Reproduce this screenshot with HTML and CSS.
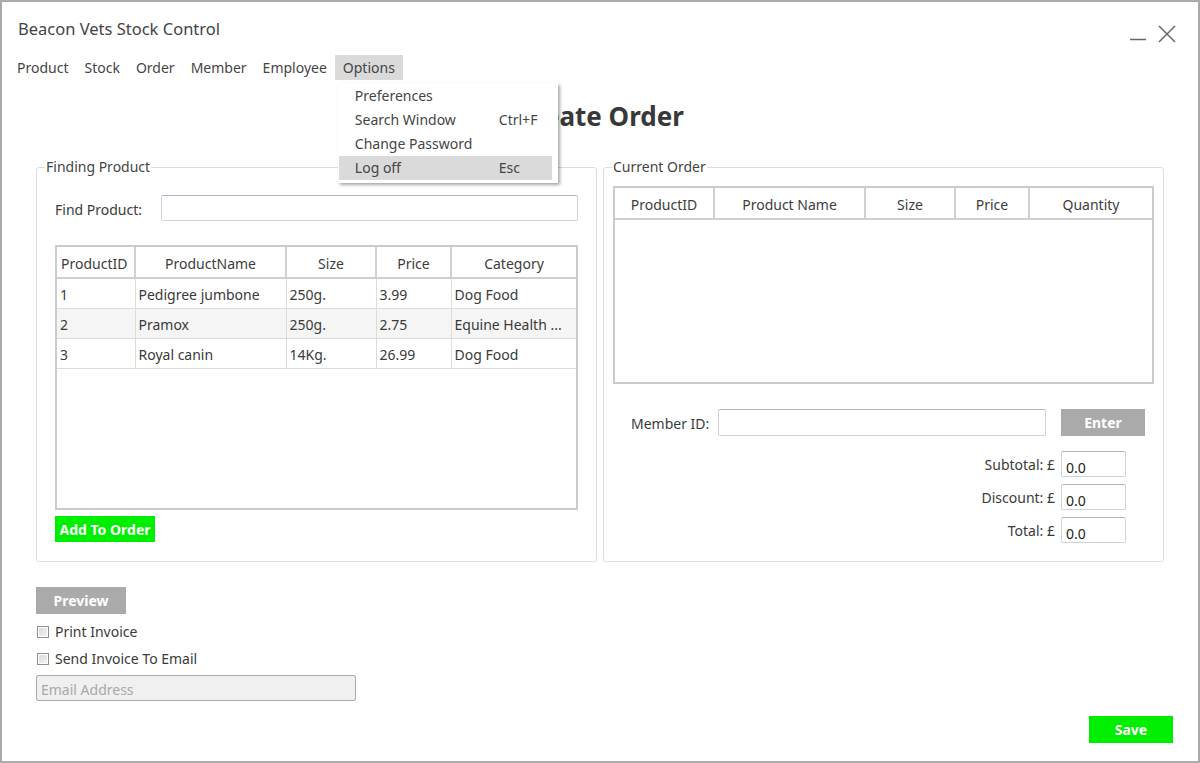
FILE: index.html
```html
<!DOCTYPE html>
<html>
<head>
<meta charset="utf-8">
<title>Beacon Vets Stock Control</title>
<link rel="stylesheet" href="styles.css">
</head>
<body>
<div class="window">
  <div class="titlebar">
    <div class="title">Beacon Vets Stock Control</div>
    <div class="controls">
      <svg class="min-icon" width="18" height="18" viewBox="0 0 18 18"><line x1="1" y1="14.5" x2="17" y2="14.5" stroke="#666" stroke-width="1.5"/></svg>
      <svg class="close-icon" width="18" height="18" viewBox="0 0 18 18"><path d="M1 1 L17 17 M17 1 L1 17" stroke="#666" stroke-width="1.5" fill="none"/></svg>
    </div>
  </div>
  <nav class="menubar">
    <div class="menu-item">Product</div>
    <div class="menu-item">Stock</div>
    <div class="menu-item">Order</div>
    <div class="menu-item">Member</div>
    <div class="menu-item">Employee</div>
    <div class="menu-item open">Options
      <div class="dropdown">
        <div class="dd-item"><span>Preferences</span><span class="key"></span></div>
        <div class="dd-item"><span>Search Window</span><span class="key">Ctrl+F</span></div>
        <div class="dd-item"><span>Change Password</span><span class="key"></span></div>
        <div class="dd-item active"><span>Log off</span><span class="key">Esc</span></div>
      </div>
    </div>
  </nav>
  <h1 class="heading">Create Order</h1>
  <div class="panels">
    <fieldset class="group">
      <legend>Finding Product</legend>
      <div class="group-body left-body">
        <div class="find-row">
          <label class="find-label">Find Product:</label>
          <input class="text-input find-input" type="text">
        </div>
        <div class="grid grid-left">
          <table>
            <colgroup><col class="c1"><col class="c2"><col class="c3"><col class="c4"><col class="c5"></colgroup>
            <thead><tr><th>ProductID</th><th>ProductName</th><th>Size</th><th>Price</th><th>Category</th></tr></thead>
            <tbody>
              <tr><td>1</td><td>Pedigree jumbone</td><td>250g.</td><td>3.99</td><td>Dog Food</td></tr>
              <tr class="alt"><td>2</td><td>Pramox</td><td>250g.</td><td>2.75</td><td>Equine Health ...</td></tr>
              <tr><td>3</td><td>Royal canin</td><td>14Kg.</td><td>26.99</td><td>Dog Food</td></tr>
            </tbody>
          </table>
        </div>
        <button class="btn green add-btn">Add To Order</button>
      </div>
    </fieldset>
    <fieldset class="group">
      <legend>Current Order</legend>
      <div class="group-body right-body">
        <div class="grid grid-right">
          <table>
            <colgroup><col class="r1"><col class="r2"><col class="r3"><col class="r4"><col class="r5"></colgroup>
            <thead><tr><th>ProductID</th><th>Product Name</th><th>Size</th><th>Price</th><th>Quantity</th></tr></thead>
            <tbody></tbody>
          </table>
        </div>
        <div class="member-row">
          <label class="member-label">Member ID:</label>
          <input class="text-input member-input" type="text">
          <button class="btn gray enter-btn">Enter</button>
        </div>
        <div class="totals">
          <div class="total-row"><span>Subtotal: £</span><input class="text-input num-input" type="text" value="0.0"></div>
          <div class="total-row"><span>Discount: £</span><input class="text-input num-input" type="text" value="0.0"></div>
          <div class="total-row"><span>Total: £</span><input class="text-input num-input" type="text" value="0.0"></div>
        </div>
      </div>
    </fieldset>
  </div>
  <div class="bottom">
    <div class="bottom-left">
      <button class="btn gray preview-btn">Preview</button>
      <div class="check-row"><span class="checkbox"></span><span>Print Invoice</span></div>
      <div class="check-row"><span class="checkbox"></span><span>Send Invoice To Email</span></div>
      <input class="text-input email-input" type="text" placeholder="Email Address" disabled>
    </div>
    <button class="btn green save-btn">Save</button>
  </div>
</div>
</body>
</html>
```
FILE: styles.css
```css
* { box-sizing: border-box; }
html, body { margin: 0; padding: 0; background: #fff; }
body {
  font-family: "Noto Sans", "Open Sans", sans-serif;
  font-size: 14px;
  color: #3a3a3a;
}
.window {
  width: 1200px;
  height: 763px;
  border: 2px solid #ababab;
  display: flex;
  flex-direction: column;
  position: relative;
  overflow: hidden;
}
.titlebar {
  height: 53px;
  display: flex;
  justify-content: space-between;
  align-items: flex-start;
  padding: 15px 22px 0 16px;
}
.title {
  font-size: 16.5px;
  line-height: 24px;
  color: #444;
}
.controls {
  display: flex;
  gap: 11px;
  padding-top: 8px;
}
.menubar {
  display: flex;
  height: 25px;
  padding-left: 7px;
}
.menu-item {
  position: relative;
  padding: 0 8px;
  line-height: 25px;
  color: #454545;
}
.menu-item.open { background: #dadada; }
.dropdown {
  position: absolute;
  left: 3px;
  top: 28px;
  width: 220px;
  background: #fff;
  padding: 1px 6px 3px 1px;
  box-shadow: 2px 2px 3px rgba(0,0,0,0.35);
  z-index: 10;
}
.dd-item {
  display: flex;
  height: 24px;
  line-height: 24px;
  padding-left: 16px;
}
.dd-item span:first-child { width: 144px; }
.dd-item.active { background: #dadada; }
.heading {
  margin: 18px 0 0;
  text-align: center;
  font-size: 26px;
  line-height: 36px;
  font-weight: bold;
  color: #383838;
}
.panels {
  display: flex;
  gap: 6px;
  margin: 23px 0 0 34px;
}
.group {
  width: 561px;
  height: 405px;
  margin: 0;
  padding: 0;
  border: 1px solid #d5dfe5;
  border-radius: 3px;
}
.group legend {
  margin-left: 8px;
  padding: 0 1px;
  line-height: 20px;
  color: #444;
}
.left-body { padding: 18px 18px 0 18px; }
.right-body { padding: 9px 9px 0 9px; }
.find-row { display: flex; align-items: center; }
.find-label { width: 106px; padding-top: 2px; }
.text-input {
  font-family: inherit;
  font-size: 14px;
  color: #222;
  border: 1px solid #cdd3d9;
  border-top-color: #abb7c4;
  border-radius: 2px;
  background: #fff;
  height: 26px;
  padding: 2px 4px 0;
  outline: none;
}
.find-input { width: 417px; }
.grid {
  border: 2px solid #cbcbcb;
  background: #fff;
}
.grid-left { margin-top: 24px; width: 523px; height: 265px; }
.grid-right { width: 541px; height: 198px; }
.grid table {
  border-collapse: collapse;
  table-layout: fixed;
  width: 100%;
}
.grid th {
  font-weight: normal;
  height: 31px;
  border-right: 2px solid #d0d0d0;
  border-bottom: 2px solid #cfcfcf;
  color: #3d3d3d;
  padding: 2px 0 0;
}
.grid th:last-child { border-right: none; }
.grid td {
  height: 30px;
  border-right: 1px solid #dcdcdc;
  border-bottom: 1px solid #dcdcdc;
  padding: 2px 3px 0;
  white-space: nowrap;
  overflow: hidden;
}
.grid td:last-child { border-right: none; }
.grid tr.alt td { background: #f5f5f5; }
.grid-left th:first-child { text-align: left; padding-left: 4px; }
.c1 { width: 78px; } .c2 { width: 151px; } .c3 { width: 90px; } .c4 { width: 75px; } .c5 { width: 125px; }
.r1 { width: 99px; } .r2 { width: 151px; } .r3 { width: 90px; } .r4 { width: 74px; } .r5 { width: 123px; }
.btn {
  font-family: inherit;
  font-weight: bold;
  font-size: 14px;
  color: #fff;
  border: none;
  border-radius: 0;
  padding: 0;
  cursor: pointer;
}
.green { background: #00ef00; }
.gray { background: #aaaaaa; }
.add-btn { margin-top: 6px; width: 100px; height: 26px; display: block; }
.member-row {
  display: flex;
  align-items: center;
  margin-top: 25px;
  padding-left: 18px;
}
.member-label { width: 87px; padding-top: 2px; }
.member-input { width: 328px; height: 27px; }
.enter-btn { margin-left: 15px; width: 84px; height: 27px; }
.totals {
  display: flex;
  flex-direction: column;
  align-items: flex-end;
  gap: 7px;
  margin-top: 15px;
  padding-right: 28px;
}
.total-row { display: flex; align-items: center; gap: 6px; }
.num-input { width: 65px; height: 26px; padding-top: 6px; }
.bottom {
  flex: 1;
  display: flex;
  justify-content: space-between;
  align-items: flex-end;
  padding: 25px 25px 18px 34px;
}
.bottom-left {
  align-self: flex-start;
  display: flex;
  flex-direction: column;
}
.preview-btn { width: 90px; height: 27px; }
.check-row {
  display: flex;
  align-items: center;
  gap: 6px;
  height: 27px;
  padding-left: 1px;
}
.check-row:first-of-type { margin-top: 4px; }
.checkbox {
  width: 12px;
  height: 12px;
  border: 1px solid #8f8f8f;
  background: linear-gradient(135deg, #d8d8d8, #f4f4f4);
  box-shadow: inset 0 0 0 1px #fff;
}
.email-input {
  margin-top: 3px;
  width: 320px;
  height: 26px;
  background: #f0f0f0;
  border: 1px solid #adadad;
}
.email-input::placeholder { color: #a8a8a8; }
.save-btn { width: 84px; height: 27px; }
```
